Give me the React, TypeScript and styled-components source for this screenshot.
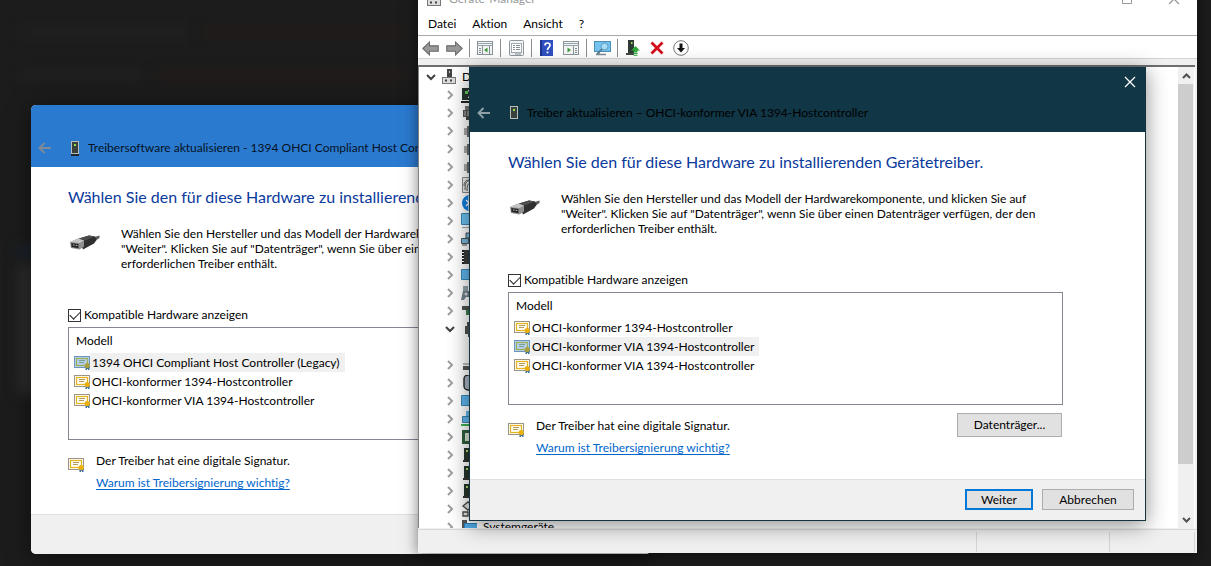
import React, { useState } from 'react';
import styled, { createGlobalStyle, css } from 'styled-components';

const GlobalStyle = createGlobalStyle`
  * { box-sizing: border-box; }
  body {
    margin: 0;
    background: #1c1c1c;
    color: #000;
    font: 12px/16px Lato, 'Open Sans', sans-serif;
    font-variant-ligatures: none;
  }
  button, input { font: inherit; color: inherit; font-variant-ligatures: none; }
  button { padding: 0; border: 0; background: none; }
  svg { display: block; flex: none; }
`;

/* ---------- desktop ---------- */

const Desktop = styled.main`
  position: relative;
  height: 100vh;
  overflow: hidden;
  background: #1c1c1c;
`;

const Glow = styled.div<{ $x: number; $y: number; $w: number; $h: number; $c: string }>`
  position: absolute;
  left: ${p => p.$x}px;
  top: ${p => p.$y}px;
  width: ${p => p.$w}px;
  height: ${p => p.$h}px;
  background: ${p => p.$c};
  filter: blur(6px);
`;

/* ---------- device manager ---------- */

const ManagerWindow = styled.section`
  position: absolute;
  left: 418px;
  right: 14px;
  top: -16px;
  bottom: 13px;
  display: flex;
  flex-direction: column;
  background: #fff;
  box-shadow: 0 2px 14px rgba(0, 0, 0, 0.5);
`;

const ManagerTitle = styled.header`
  display: flex;
  align-items: center;
  height: 30px;
  padding: 0 17px 0 9px;
  gap: 8px;
  color: #999;
`;

const CaptionButtons = styled.div`
  display: flex;
  margin-left: auto;
  gap: 36px;
`;

const MenuBar = styled.nav`
  display: flex;
  height: 22px;
  align-items: center;
  padding: 0 10px 2px;
  gap: 16px;
  border-bottom: 1px solid #a9a9a9;
`;

const Toolbar = styled.div`
  display: flex;
  align-items: flex-end;
  height: 23px;
  border-bottom: 1px solid #d4d4d4;
`;

const ToolButton = styled.button`
  display: grid;
  place-items: center;
  width: 24px;
  height: 20px;
`;

const ToolSeparator = styled.span`
  width: 1px;
  height: 18px;
  margin: 0 3px 1px;
  background: #8c8c8c;
`;

const TreeFrame = styled.div`
  display: flex;
  flex: 1;
  min-height: 0;
  padding: 6px 2px 1px 0;
  background: #f0f0f0;
`;

const TreePane = styled.div`
  display: flex;
  flex: 1;
  padding-right: 1px;
  border-top: 2px solid #6e6e6e;
  border-left: 1px solid #828282;
  background: #fff;
  overflow: hidden;
`;

const Tree = styled.ul`
  flex: 1;
  margin: 0;
  padding: 1px 0 0 4px;
  list-style: none;
`;

const TreeRow = styled.li<{ $level: number }>`
  display: flex;
  align-items: center;
  height: 18px;
  padding-left: ${p => p.$level * 19}px;
  white-space: nowrap;
`;

const Expander = styled.button`
  display: grid;
  place-items: center;
  width: 16px;
  height: 18px;
  margin-right: 3px;
`;

const TreeLabel = styled.span`
  margin-left: 6px;
`;

const ScrollBar = styled.div`
  display: flex;
  flex-direction: column;
  width: 16px;
  background: #f0f0f0;
`;

const ScrollArrow = styled.button`
  display: grid;
  place-items: center;
  height: 17px;
`;

const ScrollTrack = styled.div`
  flex: 1;
`;

const ScrollThumb = styled.div`
  height: 89%;
  margin-right: 1px;
  background: #cdcdcd;
`;

const StatusBar = styled.footer`
  display: grid;
  grid-template-columns: 1fr 133px 85px;
  height: 24px;
  padding: 2px 2px 1px 0;
  border-top: 1px solid #d9d9d9;
  background: #f0f0f0;
`;

const StatusCell = styled.span`
  border-right: 1px solid #d4d4d4;
`;

/* ---------- wizard dialogs ---------- */

const DialogWindow = styled.section<{ $active: boolean }>`
  position: absolute;
  ${p =>
    p.$active
      ? css`
          left: 469px;
          right: 65px;
          top: 67px;
          border: 1px solid #14333f;
          border-top: 0;
          background: #fff;
          box-shadow: 0 4px 20px rgba(0, 0, 0, 0.45);
        `
      : css`
          left: 31px;
          width: 620px;
          top: 105px;
          border-radius: 5px;
          overflow: hidden;
          background: #fff;
          box-shadow: 0 4px 24px rgba(0, 0, 0, 0.5);
        `}
`;

const DialogCaption = styled.header<{ $active: boolean }>`
  position: relative;
  display: flex;
  align-items: flex-end;
  height: ${p => (p.$active ? 65 : 62)}px;
  padding: 0 7px 11px;
  background: ${p => (p.$active ? '#113646' : '#2a7acf')};
  color: ${p => (p.$active ? '#000' : '#06121f')};
`;

const CaptionLine = styled.div`
  display: flex;
  align-items: center;
  height: 16px;
  white-space: nowrap;
`;

const BackButton = styled.button`
  width: 14px;
  margin-right: 18px;
`;

const CaptionText = styled.h1`
  margin: 0 0 0 8px;
  font: inherit;
  font-variant-ligatures: none;
`;

const CloseButton = styled.button`
  position: absolute;
  top: 8px;
  right: 8px;
  padding: 1px;
`;

const DialogBody = styled.div<{ $active: boolean }>`
  padding: 20px 82px 23px ${p => (p.$active ? 38 : 37)}px;
`;

const Heading = styled.h2`
  margin: 0;
  color: #0a3a9c;
  font-size: 16px;
  font-weight: 400;
  line-height: 20px;
  white-space: nowrap;
`;

const Intro = styled.div`
  display: flex;
  margin-top: 19px;
  padding-left: 2px;
  gap: 21px;
`;

const CableSlot = styled.span`
  padding-top: 8px;
`;

const IntroText = styled.p`
  margin: 0;
  line-height: 15px;
  white-space: nowrap;
`;

const CheckLabel = styled.label`
  display: flex;
  align-items: center;
  height: 14px;
  margin-top: 37px;
  gap: 3px;
`;

const CheckBox = styled.input`
  appearance: none;
  width: 13px;
  height: 13px;
  margin: 0;
  border: 1px solid #333;
  background: #fff;
  display: grid;
  place-items: center;
  &:checked::after {
    content: '';
    width: 9px;
    height: 5px;
    margin-top: -3px;
    border: solid #222;
    border-width: 0 0 1px 1px;
    transform: rotate(-45deg);
  }
`;

const ListFrame = styled.div`
  min-height: 113px;
  margin-top: 5px;
  padding: 5px 5px 0;
  border: 1px solid #828790;
`;

const ModelTable = styled.table`
  border-collapse: collapse;
  th, td { padding: 0; font-weight: 400; text-align: left; }
  th { height: 20px; padding: 0 0 4px 2px; }
`;

const ModelRow = styled.div`
  display: flex;
  align-items: center;
  height: 19px;
  white-space: nowrap;
`;

const ModelName = styled.span<{ $selected: boolean }>`
  padding: 0 5px 0 2px;
  line-height: 19px;
  background: ${p => (p.$selected ? '#f0f0f0' : 'transparent')};
`;

const Signature = styled.div`
  display: flex;
  align-items: flex-start;
  margin-top: 8px;
  padding-right: 1px;
`;

const SignatureIcon = styled.span`
  width: 28px;
  padding-top: 9px;
`;

const SignatureText = styled.div`
  display: flex;
  flex-direction: column;
  align-items: flex-start;
  flex: 1;
  padding-top: 5px;
  gap: 6px;
`;

const HelpLink = styled.a`
  color: #0066cc;
  text-decoration: underline;
  text-underline-offset: 2px;
`;

const PushButton = styled.button<{ $width: number; $primary?: boolean }>`
  width: ${p => p.$width}px;
  height: 100%;
  min-height: 21px;
  border: ${p => (p.$primary ? '2px solid #0078d7' : '1px solid #adadad')};
  background: #e1e1e1;
`;

const DiskSlot = styled.div`
  height: 24px;
`;

const DialogFooter = styled.footer<{ $active: boolean }>`
  display: flex;
  justify-content: flex-end;
  height: ${p => (p.$active ? 41 : 40)}px;
  padding: 9px 11px 10px;
  gap: 9px;
  border-top: 1px solid #dfdfdf;
  background: #f0f0f0;
`;

/* ---------- icons ---------- */

const BackArrow = ({ color }: { color: string }) => (
  <svg width="14" height="12" viewBox="0 0 14 12" fill="none" stroke={color} strokeWidth="1.8">
    <path d="M13 6H1.5M6.5 1 1.5 6l5 5" />
  </svg>
);

const DeviceIcon = ({ base }: { base: boolean }) => (
  <svg width="10" height="16" viewBox="0 0 10 16">
    <rect x="1" y="1" width="8" height="13" fill="#b9bdb8" />
    <rect x="2" y="2" width="6" height="11" fill="#39413c" />
    <rect x="4" y="4" width="2" height="2" fill="#8fe04c" />
    {base && <path d="M1 14h8v2H1z" fill="#1d2630" />}
  </svg>
);

const CableIcon = () => (
  <svg width="30" height="18" viewBox="0 0 30 18">
    <path d="M23 3.500 29.500 1.500v2.500L25 7z" fill="#5c5c5c" />
    <path d="M9 4.500 19 1.500l6 1 1.500 3.500L24 9.500l-11 6z" fill="#303030" />
    <path d="M9 4.500 19 1.500l6 1-10 4z" fill="#4c4c4c" />
    <path d="M0 8 8 4.500l6 2v6l-4.500 3L1 14z" fill="#8f8f8f" />
    <path d="M0 8 8 4.500l6 2L9.500 9z" fill="#c4c4c4" />
    <path d="M1.300 9 8.500 10v4.200L1.500 13z" fill="#262626" />
    <path d="M3 10.500h1.500v1H3zM5.800 11h1.500v1H5.800z" fill="#bbb" />
  </svg>
);

const CertificateIcon = ({ selected = false }: { selected?: boolean }) => (
  <svg width="16" height="15" viewBox="0 0 16 15">
    <rect x=".5" y="1.500" width="15" height="11" fill={selected ? '#b5d3ee' : '#fffdf2'} stroke={selected ? '#6f94b8' : '#9c9484'} />
    <rect x="2.500" y="3.500" width="11" height="7" fill="none" stroke={selected ? '#9fae52' : '#eab321'} strokeWidth="1.200" />
    <path d="M5 5.500h6M5 7.500h5" stroke={selected ? '#7a9c8c' : '#b39a58'} />
    <path d="M11.500 11.500h4V15h-1.500v-1h-1v1h-1.500z" fill="#3d6f9e" />
    <circle cx="13.200" cy="10.600" r="2.600" fill={selected ? '#a9a13e' : '#e9b010'} />
  </svg>
);

const Chevron = ({ open }: { open: boolean }) =>
  open ? (
    <svg width="10" height="7" viewBox="0 0 10 7" fill="none" stroke="#404040" strokeWidth="2">
      <path d="m1 1 4 4 4-4" />
    </svg>
  ) : (
    <svg width="7" height="10" viewBox="0 0 7 10" fill="none" stroke="#a0a0a0" strokeWidth="2">
      <path d="m1 1 4 4-4 4" />
    </svg>
  );

const ScrollChevron = ({ up }: { up: boolean }) => (
  <svg width="9" height="6" viewBox="0 0 9 6" fill="none" stroke="#505050" strokeWidth="2">
    <path d={up ? 'm1 5 3.500-3.500L8 5' : 'm1 1 3.500 3.500L8 1'} />
  </svg>
);

const CrossIcon = ({ color }: { color: string }) => (
  <svg width="12" height="12" viewBox="0 0 12 12" stroke={color} strokeWidth="1.300">
    <path d="m1 1 10 10M11 1 1 11" />
  </svg>
);

const ComputerIcon = () => (
  <svg width="14" height="16" viewBox="0 0 14 16">
    <rect x="5" y="0" width="5" height="9" fill="#444" />
    <rect x="7" y="2" width="1" height="2" fill="#ccc" />
    <rect x=".5" y="8.500" width="13" height="6" fill="#ddd" stroke="#777" />
    <path d="M3 10.500h2v2H3zM8 10.500h2v2H8z" fill="#444" />
  </svg>
);

const Arrow = ({ back }: { back?: boolean }) => (
  <svg width="17" height="15" viewBox="0 0 16 14">
    <path
      d={back ? 'M.8 7 7 1v3.500h8.300v5H7V13z' : 'M15.200 7 9 1v3.500H.7v5H9V13z'}
      fill="#999"
      stroke="#6a6a6a"
    />
  </svg>
);

const PanelIcon = ({ right }: { right?: boolean }) => (
  <svg width="16" height="14" viewBox="0 0 16 14">
    <rect x=".5" y=".5" width="15" height="13" fill="#f4f6f6" stroke="#8b969b" />
    <path d="M1 2.500h14M1 4.500h14" stroke="#93a3ab" />
    <path d={right ? 'M10.500 5v8' : 'M5.500 5v8'} stroke="#8b969b" />
    <path d={right ? 'M12 7.500h2M12 9.500h2M12 11.500h2' : 'M2 7.500h2M2 9.500h2M2 11.500h2M12.500 5v8'} stroke="#7f8d94" />
    <path d={right ? 'M4.500 6.500 8 9l-3.500 2.500z' : 'M10.500 6.500 7 9l3.500 2.500z'} fill="#3f9a3a" />
  </svg>
);

const PropertiesIcon = () => (
  <svg width="15" height="16" viewBox="0 0 15 16">
    <rect x=".5" y=".5" width="14" height="15" rx="1" fill="#f3f5f6" stroke="#8d979c" />
    <rect x="2.500" y="3.500" width="10" height="9" fill="#fff" stroke="#a2acb0" />
    <path d="M4 5.500h2M7 5.500h4M4 7.500h2M7 7.500h4M4 9.500h2M7 9.500h4M6 14h6" stroke="#83929a" />
  </svg>
);

const HelpIcon = () => (
  <svg width="14" height="16" viewBox="0 0 14 16">
    <rect width="13" height="16" fill="#2f4fc0" />
    <path d="M0 0h2v16H0z" fill="#1c338f" />
    <path d="M5 5.500C5 3.500 6.200 3 7.500 3S10 3.800 10 5.300C10 7.300 7.500 7.300 7.500 10" fill="none" stroke="#fff" strokeWidth="1.700" />
    <path d="M6.600 11.500h1.800v1.800H6.600z" fill="#fff" />
  </svg>
);

const ScanIcon = () => (
  <svg width="17" height="15" viewBox="0 0 17 15">
    <rect x=".5" y=".5" width="16" height="10" fill="#74c3ee" stroke="#4b8fb5" />
    <path d="M2 13.500h10M5 11v2" stroke="#7f8d96" strokeWidth="1.500" />
    <circle cx="10.500" cy="5.500" r="3.500" fill="#a9dbf5" stroke="#5a9fc4" />
    <path d="m8 8-5 5" stroke="#4d7388" strokeWidth="1.500" />
  </svg>
);

const UpdateIcon = () => (
  <svg width="14" height="16" viewBox="0 0 14 16">
    <path d="M2 0h6v13H2z" fill="#2f3a35" />
    <path d="M5 2h1.500v2H5z" fill="#9ae05a" />
    <path d="M0 13h8v2H0z" fill="#444" />
    <path d="m9.500 6 4.500 4.500h-2.500v2h-4v-2H5zM7.500 13h4v1h-4zM7.500 14.800h4v1h-4z" fill="#2fa83a" />
  </svg>
);

const RemoveIcon = () => (
  <svg width="14" height="14" viewBox="0 0 14 14" stroke="#d30d1c" strokeWidth="2.800">
    <path d="m1.500 1.500 11 11M12.500 1.500l-11 11" />
  </svg>
);

const DisableIcon = () => (
  <svg width="16" height="16" viewBox="0 0 16 16">
    <circle cx="8" cy="8" r="7.300" fill="#fff" stroke="#777" />
    <path d="M6.500 3.500h3V8H12l-4 4.500L4 8h2.500z" fill="#111" />
  </svg>
);

type Kind =
  | 'audio' | 'plug' | 'port' | 'finger' | 'bluetooth' | 'monitor' | 'network' | 'chip' | 'hid'
  | 'card' | 'usb' | 'bar' | 'mouse' | 'screen' | 'ports' | 'board' | 'tower' | 'link' | 'system';

const deviceShapes: Record<Kind, React.ReactNode> = {
  audio: <><path d="M1 1h14v12H1z" fill="#26352c" /><path d="M4 4h3v3H4z" fill="#5fd05a" /><path d="M7 3l3 4-3 4" stroke="#e8f4e8" fill="none" /><path d="M0 14h16v2H0z" fill="#222" /></>,
  plug: <><path d="M4 1h8v4H4z" fill="#777" /><path d="M2 5h12v7H2z" fill="#555" /><path d="M4 6v5M7 6v5" stroke="#bbb" /><path d="M5 12h6v3H5z" fill="#444" /></>,
  port: <><path d="M3 5h3v7H3z" fill="#aaa" /><path d="M6 3h9v11H6z" fill="#6a6e70" /></>,
  finger: <><path d="M1.500.5h13v15h-13z" fill="#eee" stroke="#888" /><path d="M4 13c0-7 1-9 5-9M6 14c0-6 1-8 4-8M3 9c0-4 2-6 5-6" stroke="#555" fill="none" /></>,
  bluetooth: <><circle cx="9" cy="8" r="8" fill="#0f7fe0" /><path d="m5 5 6 6-3 3V2l3 3-6 6" stroke="#fff" fill="none" strokeWidth="1.300" /></>,
  monitor: <><path d="M.5.5h15v11H.5z" fill="#6cc0f0" stroke="#3886b3" /><path d="M1 14.500h13" stroke="#9aa4aa" /></>,
  network: <><path d="M.5 7.500h7v5h-7zM5 2h10v5H5z" fill="#78b9dc" stroke="#4a555a" /><path d="M1 14h5" stroke="#444" /></>,
  chip: <><path d="M3 1h11v14H3z" fill="#3b3b3b" /><path d="M2 1v15" stroke="#222" strokeWidth="2" strokeDasharray="2 1" /></>,
  hid: <><path d="M2 6h12l2 9h-3l-2-3H5l-2 3H0z" fill="#6f8189" /><path d="M2 1h5v5H2z" fill="#8fa3ab" /><circle cx="5" cy="9" r="1.500" fill="#dde" /></>,
  card: <><path d="M1 3h15v4H1z" fill="#49524d" /><path d="M5 7h8v5H5z" fill="#3c7c4c" /></>,
  usb: <path d="M4 5h2V1h6v4h2v8h-3v3H7v-3H4z" fill="#4c5250" />,
  bar: <><path d="M2 6h14v2H2z" fill="#bbb" /><path d="M2 9h14v4H2z" fill="#555" /></>,
  mouse: <rect x="3" y="0" width="10" height="15" rx="4" fill="#a8b6c4" stroke="#222" strokeWidth="1.400" />,
  screen: <path d="M.5 2.500h15v10H.5z" fill="#5eb5ec" stroke="#3886b3" />,
  ports: <><path d="M1.500 5.500h12v6h-12z" fill="#62b7ea" stroke="#3886b3" /><path d="M5 0h10v5H5z" fill="#62b7ea" /><path d="M0 14h9" stroke="#3db04d" strokeWidth="2" /></>,
  board: <><path d="M1 1h14v14H1z" fill="#2f5f3a" /><path d="M4 4h8v8H4z" fill="#d5e3d3" /></>,
  tower: <><path d="M3 1h10v12H3z" fill="#26352c" /><path d="M5 3h2v2H5z" fill="#a5e070" /><path d="M2 13h12v2H2z" fill="#333" /></>,
  link: <path d="m2 5 5-4 5 4-5 4zM2 11h5v4H2zM9 11h5v4H9z" fill="#e4e4e4" stroke="#4a4a4a" strokeWidth="1.400" />,
  system: <><path d="M1 1h5v12H1z" fill="#555" /><path d="M3.500 4.500h13v9h-13z" fill="#50ace8" stroke="#2c7db5" /></>,
};

const DeviceGlyph = ({ kind }: { kind: Kind }) => (
  <svg width="16" height="16" viewBox="0 0 16 16">{deviceShapes[kind]}</svg>
);

/* ---------- data ---------- */

type Node = { kind: Kind; open?: boolean; label?: string } | null;

const nodes: Node[] = [
  { kind: 'audio' }, { kind: 'plug' }, { kind: 'port' }, { kind: 'port' }, { kind: 'port' },
  { kind: 'finger' }, { kind: 'bluetooth' }, { kind: 'monitor' }, { kind: 'network' }, { kind: 'chip' },
  { kind: 'screen' }, { kind: 'hid' }, { kind: 'card' }, { kind: 'usb', open: true }, null,
  { kind: 'bar' }, { kind: 'mouse' }, { kind: 'screen' }, { kind: 'ports' }, { kind: 'board' },
  { kind: 'tower' }, { kind: 'tower' }, { kind: 'tower' }, { kind: 'link' },
  { kind: 'system', label: 'Systemgeräte' },
];

/* ---------- components ---------- */

const DeviceManager = () => (
  <ManagerWindow>
    <ManagerTitle>
      <ComputerIcon />
      <span>Geräte-Manager</span>
      <CaptionButtons>
        <button aria-label="Maximieren">
          <svg width="10" height="10" viewBox="0 0 10 10"><path d="M.5.5h9v9h-9z" fill="none" stroke="#999" /></svg>
        </button>
        <button aria-label="Schließen"><CrossIcon color="#999" /></button>
      </CaptionButtons>
    </ManagerTitle>
    <MenuBar>
      <button>Datei</button>
      <button>Aktion</button>
      <button>Ansicht</button>
      <button>?</button>
    </MenuBar>
    <Toolbar>
      <ToolButton aria-label="Zurück"><Arrow back /></ToolButton>
      <ToolButton aria-label="Vorwärts"><Arrow /></ToolButton>
      <ToolSeparator />
      <ToolButton aria-label="Konsolenstruktur"><PanelIcon /></ToolButton>
      <ToolSeparator />
      <ToolButton aria-label="Eigenschaften"><PropertiesIcon /></ToolButton>
      <ToolSeparator />
      <ToolButton aria-label="Hilfe"><HelpIcon /></ToolButton>
      <ToolButton aria-label="Aktionsbereich"><PanelIcon right /></ToolButton>
      <ToolSeparator />
      <ToolButton aria-label="Nach geänderter Hardware suchen"><ScanIcon /></ToolButton>
      <ToolSeparator />
      <ToolButton aria-label="Treiber aktualisieren"><UpdateIcon /></ToolButton>
      <ToolButton aria-label="Gerät deinstallieren"><RemoveIcon /></ToolButton>
      <ToolButton aria-label="Gerät deaktivieren"><DisableIcon /></ToolButton>
    </Toolbar>
    <TreeFrame>
      <TreePane>
        <Tree>
          <TreeRow $level={0}>
            <Expander aria-label="Reduzieren"><Chevron open /></Expander>
            <ComputerIcon />
            <TreeLabel>D</TreeLabel>
          </TreeRow>
          {nodes.map((node, i) => (
            <TreeRow key={i} $level={1}>
              {node && (
                <>
                  <Expander aria-label={node.open ? 'Reduzieren' : 'Erweitern'}>
                    <Chevron open={!!node.open} />
                  </Expander>
                  <DeviceGlyph kind={node.kind} />
                  {node.label && <TreeLabel>{node.label}</TreeLabel>}
                </>
              )}
            </TreeRow>
          ))}
        </Tree>
        <ScrollBar>
          <ScrollArrow aria-label="Nach oben"><ScrollChevron up /></ScrollArrow>
          <ScrollTrack><ScrollThumb /></ScrollTrack>
          <ScrollArrow aria-label="Nach unten"><ScrollChevron up={false} /></ScrollArrow>
        </ScrollBar>
      </TreePane>
    </TreeFrame>
    <StatusBar>
      <StatusCell />
      <StatusCell />
      <StatusCell />
    </StatusBar>
  </ManagerWindow>
);

type DialogProps = { active?: boolean; title: string; models: string[]; initial: number };

const DriverDialog = ({ active = false, title, models, initial }: DialogProps) => {
  const [selected, setSelected] = useState(initial);
  return (
    <DialogWindow $active={active}>
      <DialogCaption $active={active}>
        <CaptionLine>
          <BackButton aria-label="Zurück"><BackArrow color={active ? '#8fa0a8' : '#7f8b96'} /></BackButton>
          <DeviceIcon base={!active} />
          <CaptionText>{title}</CaptionText>
        </CaptionLine>
        {active && <CloseButton aria-label="Schließen"><CrossIcon color="#fff" /></CloseButton>}
      </DialogCaption>
      <DialogBody $active={active}>
        <Heading>Wählen Sie den für diese Hardware zu installierenden Gerätetreiber.</Heading>
        <Intro>
          <CableSlot><CableIcon /></CableSlot>
          <IntroText>
            Wählen Sie den Hersteller und das Modell der Hardwarekomponente, und klicken Sie auf
            <br />
            "Weiter". Klicken Sie auf "Datenträger", wenn Sie über einen Datenträger verfügen, der den
            <br />
            erforderlichen Treiber enthält.
          </IntroText>
        </Intro>
        <CheckLabel>
          <CheckBox type="checkbox" defaultChecked />
          Kompatible Hardware anzeigen
        </CheckLabel>
        <ListFrame>
          <ModelTable>
            <thead>
              <tr><th scope="col">Modell</th></tr>
            </thead>
            <tbody>
              {models.map((name, i) => (
                <tr key={i} onClick={() => setSelected(i)}>
                  <td>
                    <ModelRow>
                      <CertificateIcon selected={i === selected} />
                      <ModelName $selected={i === selected}>{name}</ModelName>
                    </ModelRow>
                  </td>
                </tr>
              ))}
            </tbody>
          </ModelTable>
        </ListFrame>
        <Signature>
          <SignatureIcon><CertificateIcon /></SignatureIcon>
          <SignatureText>
            <span>Der Treiber hat eine digitale Signatur.</span>
            <HelpLink href="#signierung">Warum ist Treibersignierung wichtig?</HelpLink>
          </SignatureText>
          {active && <DiskSlot><PushButton $width={105}>Datenträger...</PushButton></DiskSlot>}
        </Signature>
      </DialogBody>
      <DialogFooter $active={active}>
        {active && (
          <>
            <PushButton $width={68} $primary>Weiter</PushButton>
            <PushButton $width={92}>Abbrechen</PushButton>
          </>
        )}
      </DialogFooter>
    </DialogWindow>
  );
};

export default function App() {
  return (
    <>
      <GlobalStyle />
      <Desktop>
        <Glow $x={20} $y={28} $w={170} $h={8} $c="#212121" />
        <Glow $x={200} $y={28} $w={210} $h={8} $c="#241c1a" />
        <Glow $x={20} $y={71} $w={125} $h={8} $c="#212121" />
        <Glow $x={155} $y={71} $w={255} $h={8} $c="#241c1a" />
        <Glow $x={18} $y={246} $w={30} $h={12} $c="#1a2530" />
        <Glow $x={18} $y={264} $w={30} $h={130} $c="#2c2c2c" />
        <DriverDialog
          title="Treibersoftware aktualisieren - 1394 OHCI Compliant Host Controller"
          models={[
            '1394 OHCI Compliant Host Controller (Legacy)',
            'OHCI-konformer 1394-Hostcontroller',
            'OHCI-konformer VIA 1394-Hostcontroller',
          ]}
          initial={0}
        />
        <DeviceManager />
        <DriverDialog
          active
          title="Treiber aktualisieren – OHCI-konformer VIA 1394-Hostcontroller"
          models={[
            'OHCI-konformer 1394-Hostcontroller',
            'OHCI-konformer VIA 1394-Hostcontroller',
            'OHCI-konformer VIA 1394-Hostcontroller',
          ]}
          initial={1}
        />
      </Desktop>
    </>
  );
}
